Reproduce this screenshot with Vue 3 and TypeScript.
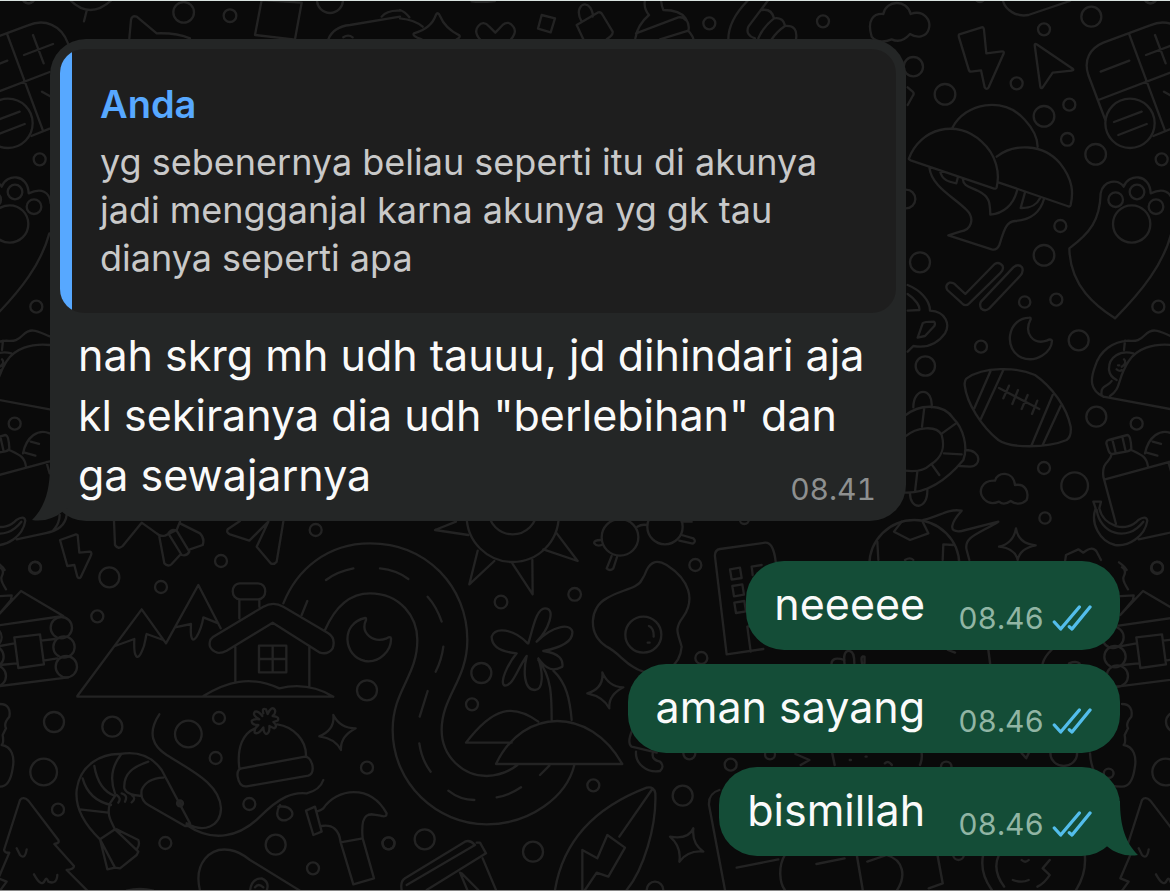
<script setup lang="ts">
interface Doodle {
  transform: string
  lines: string
  dots: [number, number, number][]
}

interface Reply {
  id: number
  text: string
  time: string
}

const quote = {
  author: 'Anda',
  text: 'yg sebenernya beliau seperti itu di akunya\njadi mengganjal karna akunya yg gk tau\ndianya seperti apa',
}

const incoming = {
  lines: ['nah skrg mh udh tauuu, jd dihindari aja', 'kl sekiranya dia udh "berlebihan" dan', 'ga sewajarnya'],
  time: '08.41',
}

const replies: Reply[] = [
  { id: 1, text: 'neeeee', time: '08.46' },
  { id: 2, text: 'aman sayang', time: '08.46' },
  { id: 3, text: 'bismillah', time: '08.46' },
]

const doodles: Doodle[] = [
  {
    // balloon, book, shoe
    transform: 'scale(.33333)',
    lines: `M210 0Q270 60 335 0M260 32L252 64M388 115L393 60Q395 45 410 50L470 100Q530 98 570 115
      M785 0L765 105L880 118M785 0L905 8L885 118M985 118Q1000 80 1050 75L1200 50M1145 50Q1160 30 1200 32M1030 112Q1045 102 1058 112`,
    dots: [[551, 37, 31], [690, 47, 19], [990, 0, 39], [85, -8, 18]],
  },
  {
    // star, heart, padlock, cupcake, hand
    transform: 'translate(400 0) scale(.33333)',
    lines: `M0 55Q45 60 68 80M0 30Q15 35 28 52M65 118Q35 108 42 100Q95 85 108 44Q114 34 120 48Q135 85 178 106Q182 112 170 118
      M240 118Q220 95 235 78Q250 60 268 80L286 98L308 75Q325 60 340 80Q352 95 333 118
      M425 45L465 55L452 97L414 86ZM545 65C525 30 545 10 558 14C575 18 580 45 578 50M530 75L595 37Q603 35 608 45L638 95Q640 105 620 118M530 75L550 118
      M735 0Q730 25 747 45Q712 75 706 115M783 0Q785 20 790 30Q840 30 857 55Q870 75 865 92Q880 110 880 118M708 100L835 52Q850 50 857 60M780 118L865 92
      M1045 0Q985 60 985 118M1105 0L1045 80Q1035 105 1065 115M1085 30Q1115 25 1122 55Q1150 50 1155 78Q1195 75 1188 118M1122 55Q1090 80 1075 115M1155 78Q1130 95 1115 118
      M215 4Q240 8 285 3`,
    dots: [[928, 70, 18], [1269, 64, 18]],
  },
  {
    // cloud, lightning, cursor, calculator, bonsai, paw
    transform: 'translate(870 0) scale(.33333)',
    lines: `M5 110C-10 60 10 40 40 42C48 0 110 -4 122 42C160 28 185 60 176 88C170 112 140 115 120 102C100 125 80 125 65 118C40 128 20 128 5 110Z
      M398 0C405 30 440 52 475 45L600 3
      M268 103L335 82Q341 80 342 90L349 160L396 154Q404 154 400 163L356 262Q350 271 344 262L333 211L303 215Q298 215 296 208L267 112Q265 105 268 103Z
      M494 135Q494 129 502 134L608 206Q613 211 605 212L548 218L518 262Q512 268 511 260Z
      M706 360L655 225C640 180 660 145 700 128L840 76C890 55 940 75 960 130L1020 290M850 408L905 386
      M778 104L885 392M685 300L905 216M692 215L778 182M828 165L915 132M855 105L887 190M882 275L912 292M732 366L815 335M745 405L830 372
      M113 262L128 275Q134 281 128 288L113 315
      M248 382C285 310 400 285 465 360Q502 400 503 440
      M117 475C150 385 260 355 335 425C380 465 390 520 380 562Q378 568 370 565L122 481Q115 478 117 475Z
      M380 470C430 430 520 430 570 490C610 540 610 580 602 615Q600 622 592 618L385 547
      M178 502C185 560 250 590 290 630C315 655 305 690 270 695L235 706L365 748Q380 752 388 735C400 700 405 665 435 663C480 660 510 640 522 597
      M278 535C280 560 300 560 325 573C360 590 360 610 361 644C400 640 430 615 441 572M210 512C215 540 235 545 259 550L264 530M465 577L452 624C485 625 500 615 510 595
      M735 955C680 920 600 860 598 745C660 700 690 660 692 580C700 540 745 535 761 560C775 520 840 520 842 580C880 562 905 575 908 610M904 700C880 790 820 870 735 955`,
    dots: [
      [664, 50, 30], [522, 88, 18], [440, 250, 18], [225, 283, 31], [130, 200, 29], [598, 314, 18], [522, 349, 31],
      [592, 418, 19], [677, 463, 31], [875, 478, 18], [108, 597, 28], [571, 678, 18], [522, 766, 31], [150, 787, 30],
      [330, -8, 14], [842, -8, 18], [780, 370, 74], [737, 599, 22], [801, 576, 22], [858, 620, 22], [785, 672, 56],
    ],
  },
  {
    // double tick, moon, football, taco, turtle, bottle, banana, burning ball
    transform: 'translate(870 270) scale(.33333)',
    lines: `M286 72L374 -18Q388 -26 398 -12Q402 0 390 10L300 98Q287 113 274 98L232 60Q224 46 238 38Q250 36 258 46Z
      M333 95L430 -8Q445 -20 456 -8Q462 5 450 18L358 115Q345 126 333 115Q328 104 333 95Z
      M478 143C410 145 400 240 455 263C500 280 545 245 546 212Q542 205 530 212C490 225 460 190 482 148Q483 142 478 143Z
      M290 325C340 290 440 290 495 315C545 350 590 410 602 470Q605 500 590 510C530 535 420 535 385 510C335 470 290 400 284 345Q284 330 290 325Z
      M363 300L313 415M400 300L332 448M548 375L485 525M572 408L518 525M387 354L508 417M417 347L400 385M444 360L427 402M473 375L455 417M502 392L486 432
      M345 690C320 665 335 630 375 632C380 605 430 600 435 645C465 640 478 665 470 690C455 705 435 703 422 693C405 705 395 702 387 695C370 702 355 700 345 690Z
      M700 380C660 360 660 330 675 290C690 240 730 215 775 212C800 215 810 210 825 195C850 170 870 185 905 199M720 378C755 355 740 330 775 275C800 235 850 220 905 225M700 380L905 418
      M790 250C750 240 715 260 717 300Q720 320 740 330M765 212L762 240M695 375C690 345 715 350 725 333M744 286h4M762 268Q772 280 755 290M740 298Q750 306 755 300
      M716 510L772 495Q782 495 784 535Q782 542 772 544L728 552Q718 552 715 540L709 520Q709 512 716 510ZM728 512L737 548M757 500L766 540
      M725 552C722 580 695 570 700 620L738 762M784 540C815 555 830 560 834 590M705 628L905 574M806 808L890 790Q950 780 956 735M935 735Q935 760 915 782M895 576L905 610
      M825 550C835 500 870 475 905 490M848 515L873 522M830 548L862 557
      M670 695L693 695L688 715C700 770 770 790 805 750Q828 735 832 752C825 800 775 830 735 825C690 815 660 760 677 715ZM680 720C690 790 770 820 820 755
      M585 875L588 855L625 838L640 848Q668 825 680 845L693 870M747 877Q765 890 770 900
      M113 45C150 60 180 90 180 122C230 125 240 165 225 190C200 225 170 235 130 228L113 245M113 72C140 90 150 110 148 120L113 122M143 203L158 160Q162 155 192 155Q197 158 193 168L165 198Z
      M130 412C130 350 190 350 185 412M105 437C150 400 220 400 250 445C280 475 295 530 280 570C230 630 170 670 105 668M105 500C140 470 200 465 215 495C225 530 220 560 180 585C160 605 130 605 105 602
      M163 412L156 470M258 460L216 490M222 550L275 553M185 583L208 615M142 605L135 665M287 540C335 540 335 590 300 590L268 588M120 668C118 720 175 725 172 655
      M95 755L72 785L120 810L175 790L158 755M22 815L25 870M250 825L220 823L218 870M105 870Q120 860 130 870
      M160 750C210 740 230 715 275 722C245 755 230 790 275 783L385 755C330 790 280 800 290 840L298 870
      M438 775Q445 820 497 826Q450 835 443 870Q435 835 387 830Q430 820 438 775Z`,
    dots: [
      [464, 96, 17], [559, 89, 18], [865, 110, 18], [333, 230, 18], [626, 211, 30], [166, 288, 29], [679, 440, 30],
      [800, 461, 18], [522, 594, 18], [614, 647, 40], [525, 744, 17], [862, 892, 17], [133, 885, 135],
    ],
  },
  {
    // cabin, mountains, house, shrimp, hat, hammer, fir
    transform: 'translate(0 480) scale(.33333)',
    lines: `M180 180L228 163L233 165L238 218L270 215Q277 217 272 228L242 292Q237 298 232 290L223 255L202 258Z
      M342 123L345 195Q355 210 368 198L425 128L470 160Q478 170 495 167L530 150L540 125M478 170L493 250Q505 262 515 252L540 225M505 160Q515 145 530 152L568 215Q560 230 545 225ZM540 130L600 160Q615 175 608 195L570 208
      M720 123L683 148Q678 158 690 163L748 182L805 125M805 125L770 200L812 250Q822 255 830 245L850 125
      M0 262Q15 270 5 290Q0 300 18 328M-30 350L35 346L33 360L-5 405M-5 405L63 333L190 408L-10 437M-10 500L43 490M123 482L165 477M0 555L50 550M130 542L172 535M-15 620L205 592M43 472L120 463L132 553L55 564Z
      M232 648L425 388L498 490L595 315L662 445M232 650L1000 650M345 498L403 477C400 540 415 540 425 515C438 490 435 475 440 462L490 480M525 442L573 432C570 485 580 485 590 470C605 445 608 425 610 412L655 430
      M720 310H774C803 310 803 358 774 358H720C691 358 691 310 720 310ZM718 360V415M778 360V380
      M652 518Q620 505 632 478L640 470L790 380Q820 363 850 380L985 460Q1008 475 998 505Q985 525 960 518L818 428L680 512Q665 520 652 518ZM706 500V605M928 500V620M777 497H859V577H777ZM818 497V577M777 537H859M610 648C680 605 750 585 838 625C900 610 950 620 1000 650
      M1095 414C1020 430 1030 530 1095 543C1140 550 1175 510 1173 475Q1172 468 1160 475C1120 490 1080 460 1098 420Q1099 412 1095 414Z
      M790 700Q785 682 798 688L803 702Q815 675 825 690Q828 700 818 708Q840 710 833 722L820 726Q835 740 822 745L808 738Q810 760 798 762Q790 758 790 742Q775 765 764 758Q762 745 775 735Q755 735 755 722Q765 715 778 718Q755 705 765 695Q775 692 787 708
      M718 865C710 800 730 760 765 745M832 733C880 740 920 780 918 830M725 865L915 830Q930 830 937 855Q942 880 925 887L740 919Q718 922 713 890Q710 868 725 865Z
      M1000 705Q1020 745 1067 745Q1020 770 1023 810Q1005 775 958 769Q1005 750 1000 705Z
      M300 1078C250 1030 225 980 230 930C240 850 310 820 360 822C420 812 460 835 485 870L570 1030Q572 1040 555 1038L445 975Q420 960 425 930Q440 895 490 893M345 1048C330 1020 320 1000 330 970L345 948
      M240 988L325 998M248 895C260 940 290 965 333 975M283 858C290 900 310 935 345 948M362 825C335 860 330 900 345 940M445 845C400 860 370 880 373 925Q380 945 425 948M350 945Q365 955 355 968M365 940Q385 945 375 965M395 945Q410 955 395 967
      M478 703C440 760 460 800 500 825C570 870 660 910 663 985C662 1040 610 1060 560 1030M560 1035C640 1090 720 1070 780 1010C840 950 880 935 920 940Q960 930 970 900M840 975C820 1010 840 1025 860 1020C890 1010 880 975 835 980
      M300 1078L322 1168L345 1163L300 1078L345 1048L415 1115L410 1125L360 1165L345 1163M350 1048L415 1080Q420 1095 412 1105
      M918 992L945 980L965 1055L940 1065ZM950 995Q965 990 970 985C1010 925 1110 910 1160 1000Q1160 1012 1145 1008C1110 1000 1080 990 1088 1075M965 1038Q1015 1030 1022 1087L1088 1075L1122 1195L1060 1213L1022 1087
      M200 1170L262 1232M200 1170Q222 1168 222 1158L163 1092Q180 1090 175 1080L85 962Q70 948 60 960L12 1110Q15 1120 28 1118L-5 1195L20 1205L0 1232M50 1105L60 1125Q75 1140 80 1108M102 1183Q125 1225 135 1200Q140 1190 145 1205Q170 1215 172 1185
      M0 672C25 672 32 690 28 710Q10 730 18 745L8 765Q12 790 5 795C35 800 45 830 38 865Q30 920 0 920Q-90 920 -96 820
      M600 1232C580 1150 630 1100 690 1110Q720 1115 750 1140L900 1232M750 1232Q755 1195 785 1195Q810 1205 800 1232M765 1222Q775 1208 790 1222M380 1232Q420 1222 460 1232M536 970h8M538 966h4M536 974h8`,
    dots: [
      [947, 150, 18], [105, 264, 18], [328, 292, 30], [663, 243, 18], [483, 321, 18], [292, 409, 18], [1101, 631, 30],
      [162, 726, 30], [337, 740, 30], [565, 762, 40], [657, 714, 18], [131, 876, 40], [647, 834, 18], [1101, 863, 18],
      [174, 989, 18], [748, 972, 18], [496, 1089, 18], [827, 1094, 30], [1165, 1090, 18], [939, 1165, 18],
      [184, 443, 32], [192, 501, 32], [199, 560, 32], [-27, 472, 32], [-21, 530, 32], [-14, 588, 32], [540, 970, 9],
    ],
  },
  {
    // road, sun, glasses, egg, building, palm island, surfboard
    transform: 'translate(380 500) scale(.33333)',
    lines: `M-290 310C-250 210 -160 130 -30 130C140 130 262 260 262 420C262 540 185 590 185 690C185 770 250 828 320 828Q375 825 412 795
      M-165 390C-130 310 -80 280 -30 280C60 280 112 350 112 420C112 530 38 570 38 690C38 850 170 973 320 973C450 973 560 890 583 795
      M-162 240Q-130 215 -80 205M0 205Q50 210 85 237M-218 303L-235 345M143 290Q170 320 185 365M190 440Q185 480 167 515M143 573L119 650M118 730Q125 780 152 815M205 872Q240 900 283 900M350 892Q390 885 423 862M480 825L508 797
      M228 65L165 90L265 105M293 152L268 253L343 183M397 190L458 283L457 180M490 148L593 183L528 97
      M772 80Q785 72 800 75M663 120Q640 120 643 130Q650 140 665 135M695 168L680 205Q690 215 700 205L712 168M905 105L940 115Q950 125 938 131L898 122M905 65h30
      M800 210Q820 170 860 195C930 240 945 300 910 350C880 390 895 400 905 440C900 500 850 530 790 515C740 500 720 460 680 440C620 400 630 320 680 295C720 270 775 265 785 240Q795 225 800 210ZM807 378Q822 385 821 410M803 428h6
      M1040 463L1005 170Q1003 150 1020 147L1155 128Q1180 125 1187 185M1040 463L1150 447M1050 208L1080 203L1085 234L1055 239ZM1057 258L1087 253L1092 284L1062 289ZM1063 308L1093 303L1098 334L1068 339ZM1118 225L1115 200L1145 195M1112 455L1102 380L1115 378
      M445 430C460 380 470 325 495 325C530 325 505 390 470 425C520 375 570 370 577 395C580 430 530 445 490 453C540 460 550 480 547 500C520 515 500 510 475 475C490 520 490 570 465 570C430 570 430 510 440 468C410 510 400 555 375 557C355 550 385 490 410 460C360 455 335 440 335 410C345 380 400 385 443 430
      M475 480C515 530 515 590 515 660M520 512C560 550 570 600 575 660M475 665C400 610 340 620 258 728H395M348 792C430 620 630 620 727 792Z
      M667 517Q685 560 730 562Q685 585 688 625Q670 590 622 580Q672 565 667 517Z
      M757 690Q740 730 755 740L830 758M768 755C765 790 800 820 840 813Q855 800 840 785Q815 780 818 760
      M525 1170C550 1020 650 920 800 863Q822 858 826 880C830 980 790 1110 740 1170M815 870L718 1010M607 1170L607 1050L652 1075L682 1005L735 1043L685 1130L650 1118L615 1170
      M940 985Q935 1030 970 1055Q925 1050 898 1085Q905 1040 870 1010Q925 1020 940 985Z
      M1018 870Q985 880 987 915L1035 1170M1070 1103L1195 1078
      M65 1170Q60 1145 75 1135L255 1025Q270 1018 285 1035L80 1155M290 1028L300 1028L318 1060L140 1170M308 1075L348 1170M240 1118L262 1170M245 1120L295 1170`,
    dots: [
      [398, 48, 138], [398, 30, 73], [363, 306, 19], [584, 283, 19], [304, 519, 30], [276, 613, 18], [946, 195, 18],
      [964, 474, 18], [640, 856, 18], [908, 887, 30], [26, 1030, 18], [134, 1018, 30], [459, 1055, 30], [825, 1170, 25],
      [1052, 794, 18], [928, 760, 18], [1170, 763, 15], [1093, 58, 14], [720, 112, 55], [855, 80, 53], [790, 404, 54],
    ],
  },
  {
    // shapes between and below the replies
    transform: 'translate(620 550) scale(.3508 .33333)',
    lines: `M603 340Q605 318 640 330M640 340Q635 300 655 303Q668 305 668 340M690 340Q685 315 697 320V340M935 300L955 308M1050 300L1055 340M1205 340Q1210 320 1230 300M1280 340Q1300 332 1310 340
      M500 612L540 630L515 645M605 610L612 645M655 630h3M700 620h3M755 640Q765 630 775 645M860 610Q862 630 855 645M1145 610L1158 625L1165 610
      M470 915C450 950 455 1000 470 1020M560 942L640 925M675 915L692 1020M760 915C810 930 815 980 790 1020M705 935L760 915M905 915L920 1000L880 1015
      M1035 915Q1025 970 1060 1020M1080 915Q1060 960 1095 1010M1325 915Q1330 970 1300 1020M1225 930L1205 955L1225 975Q1210 1000 1190 1010M1120 990Q1145 1000 1165 990M1145 930Q1155 940 1165 930`,
    dots: [[1265, 610, 38], [930, 650, 15], [965, 915, 15], [1393, 670, 14]],
  },
]
</script>

<template>
  <main class="chat">
    <svg class="wallpaper" viewBox="0 0 1170 891" preserveAspectRatio="xMidYMin slice" aria-hidden="true">
      <defs>
        <g id="doodle-tile">
          <g v-for="(doodle, i) in doodles" :key="i" :transform="doodle.transform">
            <path :d="doodle.lines" />
            <circle v-for="([cx, cy, r], j) in doodle.dots" :key="j" :cx="cx" :cy="cy" :r="r" />
          </g>
        </g>
      </defs>
      <use href="#doodle-tile" />
      <use href="#doodle-tile" x="-1122" />
      <use href="#doodle-tile" x="1122" />
    </svg>

    <article class="bubble incoming">
      <blockquote class="quote">
        <p class="author">{{ quote.author }}</p>
        <p class="quoted">{{ quote.text }}</p>
      </blockquote>
      <div class="body">
        <p v-for="line in incoming.lines" :key="line" class="text">{{ line }}</p>
        <time class="time">{{ incoming.time }}</time>
      </div>
      <svg class="tail tail-left" viewBox="0 0 38 55" aria-hidden="true">
        <path d="M20 0C20 26 26 42 38 54C26 56 15 52 8 46L0 40V0Z" />
      </svg>
    </article>

    <section class="replies">
      <article v-for="(reply, index) in replies" :key="reply.id" class="bubble outgoing">
        <p class="text">{{ reply.text }}</p>
        <div class="meta">
          <time class="time">{{ reply.time }}</time>
          <svg class="ticks" viewBox="336 43 120 81" role="img" aria-label="Dibaca">
            <path d="M343 94L362 115L418 49M388 108L396 115L450 49" />
          </svg>
        </div>
        <svg v-if="index === replies.length - 1" class="tail tail-right" viewBox="0 0 38 55" aria-hidden="true">
          <path d="M20 0C20 26 26 42 38 54C26 56 15 52 8 46L0 40V0Z" />
        </svg>
      </article>
    </section>
  </main>
</template>

<style>
body {
  margin: 0;
  background: #0a0a0a;
}
</style>

<style scoped>
.chat {
  position: relative;
  box-sizing: border-box;
  min-height: 100vh;
  padding: 38px 50px 32px;
  overflow: hidden;
  border-top: 1px solid #d9e3e0;
  border-bottom: 1px solid #8a8a8a;
  background: #0a0a0a;
  font-family: Inter, "Liberation Sans", sans-serif;
}

.wallpaper {
  position: absolute;
  top: -1px;
  left: 0;
  width: 100%;
  height: calc(100% + 2px);
  fill: none;
  stroke: #232323;
  stroke-width: 7;
  stroke-linecap: round;
  stroke-linejoin: round;
}

p,
blockquote {
  margin: 0;
}

.bubble {
  position: relative;
  box-sizing: border-box;
  color: #fafafa;
}

.incoming {
  width: 80%;
  padding: 10px 10px 16px;
  border-radius: 36px;
  background: #242626;
}

.quote {
  padding: 31px 28px 31px 40px;
  border-radius: 24px;
  background: linear-gradient(to right, #57a8ff 12px, #1e1e1e 12px);
}

.author {
  color: #57a8ff;
  font-size: 38px;
  font-weight: 600;
  line-height: 48px;
}

.quoted {
  margin-top: 10px;
  color: #c9c9c9;
  font-size: 36px;
  line-height: 48px;
  white-space: pre-line;
}

.body {
  display: flex;
  flex-wrap: wrap;
  align-items: flex-end;
  justify-content: space-between;
  padding: 12px 20px 0 18px;
}

.body .text:not(:last-of-type) {
  flex-basis: 100%;
}

.body .time {
  margin-bottom: 2px;
}

.text {
  font-size: 43px;
  line-height: 60px;
}

.time {
  color: #8e9090;
  font-size: 30px;
  font-variant-numeric: tabular-nums;
  line-height: 28px;
}

.replies {
  display: flex;
  flex-direction: column;
  align-items: flex-end;
  gap: 14px;
  margin-top: 40px;
}

.outgoing {
  display: flex;
  align-items: flex-end;
  gap: 33px;
  padding: 13px 28px 16px;
  border-radius: 38px;
  background: #144d37;
}

.meta {
  display: flex;
  align-items: flex-end;
  gap: 8px;
  margin-bottom: 2px;
}

.outgoing .time {
  color: #91b5a4;
}

.ticks {
  width: 40px;
  height: 27px;
  fill: none;
  stroke: #53bdeb;
  stroke-width: 10;
  stroke-linecap: round;
  stroke-linejoin: round;
}

.tail {
  position: absolute;
  bottom: 0;
  width: 38px;
  height: 55px;
}

.tail-left {
  left: -18px;
  fill: #242626;
  transform: scaleX(-1);
}

.tail-right {
  right: -18px;
  fill: #144d37;
}
</style>
